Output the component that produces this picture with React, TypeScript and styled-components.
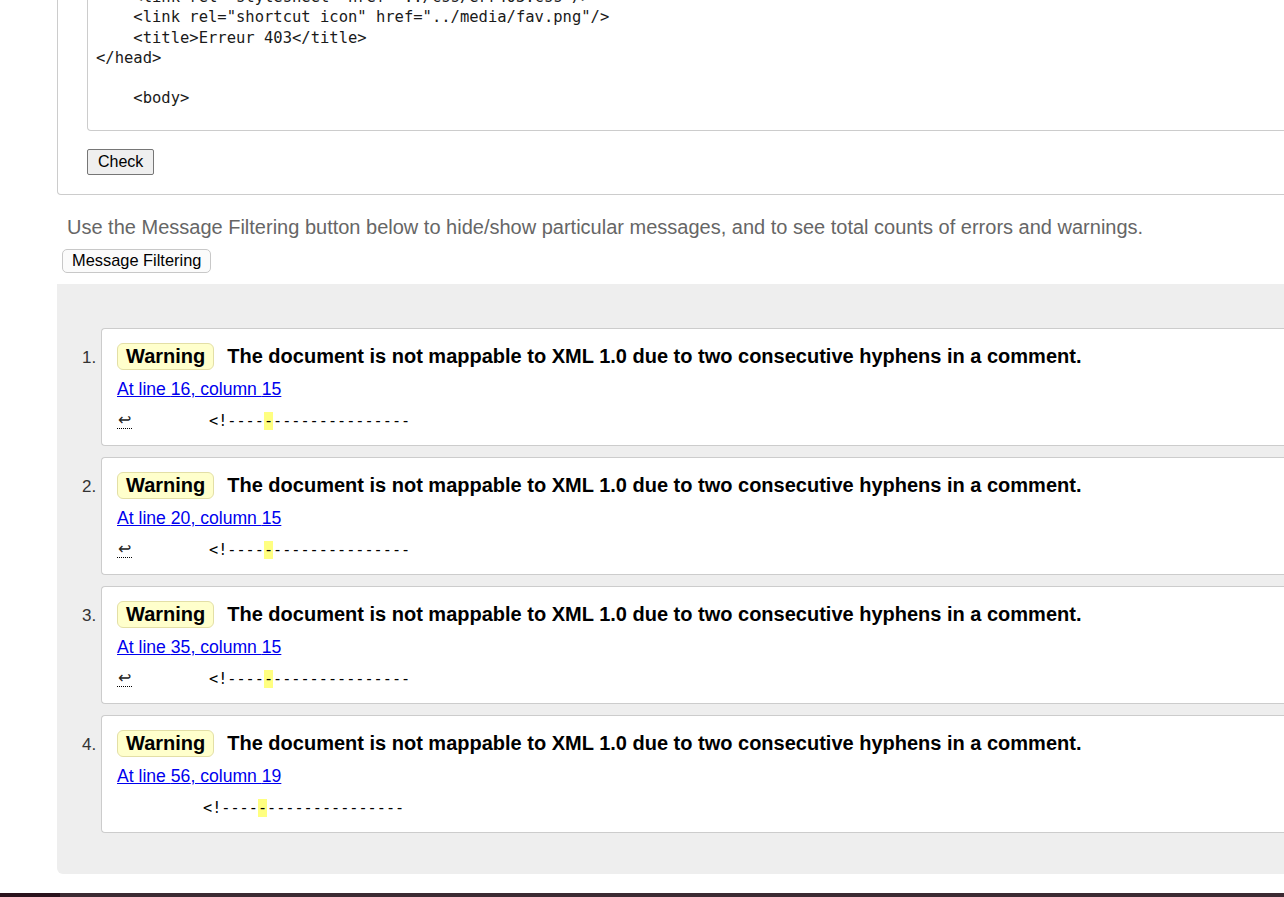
import React from 'react';
import styled, { createGlobalStyle } from 'styled-components';

const GlobalStyle = createGlobalStyle`
  html, body {
    margin: 0;
    padding: 0;
    background: #fff;
    overflow: hidden;
  }
  body {
    font-family: "Liberation Sans", Arial, sans-serif;
    color: #000;
  }
`;

const Page = styled.div`
  width: 1330px;
  margin-top: -22px;
  padding-left: 57px;
  box-sizing: border-box;
`;

const Form = styled.div`
  border: 1px solid #ccc;
  border-top: none;
  border-radius: 0 0 0 4px;
  padding: 0 0 19px 29px;
`;

const Source = styled.pre`
  margin: 0;
  padding: 9px 8px 21px;
  border: 1px solid #ccc;
  border-top: none;
  border-radius: 0 0 0 4px;
  font-family: "DejaVu Sans Mono", monospace;
  font-size: 15.5px;
  line-height: 20.25px;
  color: #1a1a1a;
`;

const CheckButton = styled.button`
  margin-top: 18px;
  height: 26px;
  padding: 0 10px;
  font-family: "Liberation Sans", Arial, sans-serif;
  font-size: 16px;
  color: #000;
  background: #efefef;
  border: 1px solid #767676;
  border-radius: 2px;
`;

const Hint = styled.p`
  margin: 21px 0 0 10px;
  font-size: 20px;
  line-height: 23px;
  color: #666;
`;

const FilterButton = styled.button`
  display: block;
  margin: 10px 0 0 5px;
  height: 24px;
  padding: 0 9px;
  font-family: "Liberation Sans", Arial, sans-serif;
  font-size: 16.4px;
  color: #000;
  background: #fbfbfb;
  border: 1px solid #c8c8c8;
  border-radius: 5px;
`;

const Results = styled.ol`
  margin: 11px 0 0;
  padding: 44px 0 41px 44px;
  background: #eee;
  border-radius: 0 0 0 6px;
  list-style: decimal outside;
`;

const Message = styled.li`
  background: #fff;
  border: 1px solid #ccc;
  border-right: none;
  border-radius: 4px 0 0 4px;
  padding: 14px 0 14px 15px;
  & + & {
    margin-top: 11px;
  }
  &::marker {
    font-family: "Liberation Sans", Arial, sans-serif;
    font-size: 17px;
    color: #333;
  }
`;

const Headline = styled.div`
  display: flex;
  align-items: center;
  gap: 13px;
`;

const Badge = styled.span`
  padding: 1px 8px;
  font-size: 20px;
  line-height: 23px;
  font-weight: bold;
  background: #ffffcc;
  border: 1px solid #e3dfa6;
  border-radius: 6px;
`;

const Text = styled.span`
  font-size: 20px;
  line-height: 23px;
  font-weight: bold;
`;

const Location = styled.a`
  display: inline-block;
  margin-top: 9px;
  font-size: 17.6px;
  line-height: 20px;
  color: #0000ee;
  text-decoration: underline;
`;

const Extract = styled.div`
  display: flex;
  align-items: center;
  margin-top: 12px;
  height: 20px;
`;

const LineBreak = styled.abbr`
  font-family: "Liberation Sans", "DejaVu Sans", sans-serif;
  font-size: 16px;
  font-weight: 300;
  line-height: 16px;
  width: 15px;
  text-decoration: none;
  border-bottom: 1px dotted #000;
  text-align: center;
  color: #222;
`;

const Code = styled.code<{ $indent: number }>`
  margin-left: ${p => p.$indent}px;
  font-family: "DejaVu Sans Mono", monospace;
  font-size: 15.2px;
  line-height: 20px;
  white-space: pre;
  color: #000;
`;

const Mark = styled.mark`
  background: #ffff80;
  color: #000;
`;

const Bar = styled.div`
  display: flex;
  margin-top: 19px;
  height: 4px;
  div:first-child {
    width: 60px;
    background: #2a121c;
  }
  div:last-child {
    flex: 1;
    background: #3c2a32;
  }
`;

const source = [
  '    <link rel="stylesheet" href="../css/err403.css"/>',
  '    <link rel="shortcut icon" href="../media/fav.png"/>',
  '    <title>Erreur 403</title>',
  '</head>',
  '',
  '    <body>',
].join('\n');

const messages = [
  { line: 16, column: 15, wrapped: true },
  { line: 20, column: 15, wrapped: true },
  { line: 35, column: 15, wrapped: true },
  { line: 56, column: 19, wrapped: false },
];

const App = () => {
  return (
    <>
      <GlobalStyle />
      <Page>
        <Form>
          <Source>{source}</Source>
          <CheckButton>Check</CheckButton>
        </Form>
        <Hint>
          Use the Message Filtering button below to hide/show particular messages, and to see total counts of errors
          and warnings.
        </Hint>
        <FilterButton>Message Filtering</FilterButton>
        <Results>
          {messages.map(m => (
            <Message key={m.line}>
              <Headline>
                <Badge>Warning</Badge>
                <Text>The document is not mappable to XML 1.0 due to two consecutive hyphens in a comment.</Text>
              </Headline>
              <Location href="#">
                At line {m.line}, column {m.column}
              </Location>
              <Extract>
                {m.wrapped && <LineBreak title="Line break">↩</LineBreak>}
                <Code $indent={m.wrapped ? 77 : 86}>
                  {'<!----'}
                  <Mark>-</Mark>
                  {'---------------'}
                </Code>
              </Extract>
            </Message>
          ))}
        </Results>
      </Page>
      <Bar>
        <div />
        <div />
      </Bar>
    </>
  );
};

export default App;
